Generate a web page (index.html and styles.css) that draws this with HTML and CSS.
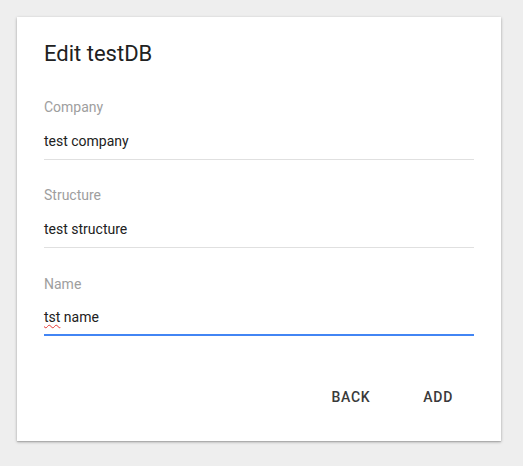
FILE: index.html
```html
<!DOCTYPE html>
<html>
<head>
<meta charset="utf-8">
<link rel="stylesheet" href="styles.css">
</head>
<body>
<div class="page">
  <div class="card">
    <h1 class="title">Edit testDB</h1>
    <div class="field">
      <div class="label">Company</div>
      <div class="input">test company</div>
    </div>
    <div class="field">
      <div class="label">Structure</div>
      <div class="input">test structure</div>
    </div>
    <div class="field focused">
      <div class="label">Name</div>
      <div class="input"><span class="misspelled">tst</span> name</div>
    </div>
    <div class="actions">
      <button class="btn">BACK</button>
      <button class="btn">ADD</button>
    </div>
  </div>
</div>
</body>
</html>
```

FILE: styles.css
```css
html, body {
  margin: 0;
  padding: 0;
  background: #eeeeee;
  font-family: Roboto, "Liberation Sans", sans-serif;
}
.page {
  padding: 17px 22px 17px 17px;
}
.card {
  width: 484px;
  box-sizing: border-box;
  background: #fff;
  padding: 22px 27px 26px 27px;
  box-shadow: 0 1px 3px rgba(0,0,0,0.28), 0 1px 1px rgba(0,0,0,0.12);
}
.title {
  margin: 0;
  font-size: 22px;
  line-height: 29px;
  font-weight: 400;
  color: #212121;
}
.field {
  margin-top: 29px;
}
.field + .field {
  margin-top: 25px;
}
.field.focused {
  margin-top: 26px;
}
.label {
  font-size: 14px;
  line-height: 20px;
  color: #9e9e9e;
}
.input {
  margin-top: 14px;
  font-size: 14px;
  line-height: 20px;
  color: #212121;
  padding-bottom: 8px;
  border-bottom: 1px solid #e0e0e0;
}
.focused .input {
  margin-top: 13px;
  padding-bottom: 7px;
  border-bottom: 2px solid #4285f4;
}
.misspelled {
  text-decoration: underline wavy #e53935;
  text-decoration-thickness: 1px;
  text-underline-offset: 2px;
}
.actions {
  display: flex;
  justify-content: flex-end;
  gap: 21px;
  margin-top: 43px;
  padding-right: 5px;
}
.btn {
  border: 0;
  background: transparent;
  font-family: Roboto, "Liberation Sans", sans-serif;
  font-size: 14px;
  font-weight: 500;
  letter-spacing: 0.7px;
  line-height: 36px;
  height: 36px;
  padding: 0 16px;
  color: #3a3a3a;
}
```
